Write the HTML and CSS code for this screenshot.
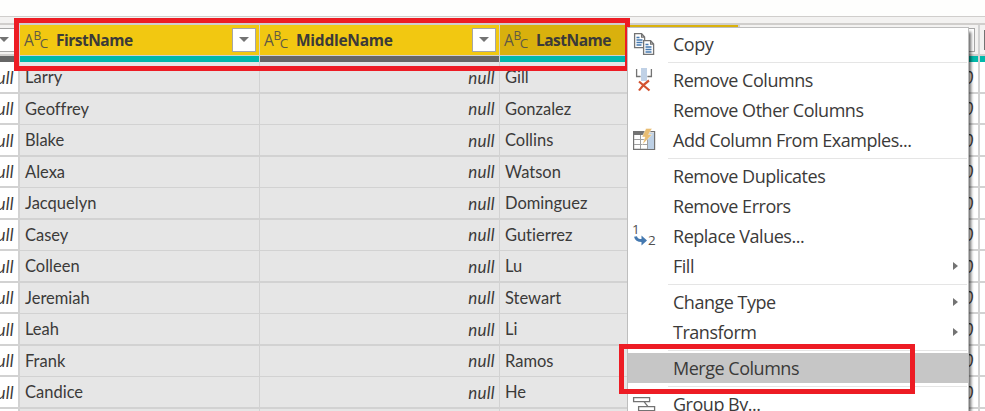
FILE: index.html
```html
<!DOCTYPE html>
<html lang="en">
<head>
<meta charset="utf-8">
<title>Query Editor</title>
<link rel="stylesheet" href="styles.css">
</head>
<body>
<div class="toolbar"></div>
<div class="gutter"></div>
<div class="table">
  <div class="column edge">
    <div class="head"><i class="drop"></i></div><div class="quality gray"></div>
    <div class="cell null">null</div><div class="cell null">null</div><div class="cell null">null</div><div class="cell null">null</div><div class="cell null">null</div><div class="cell null">null</div><div class="cell null">null</div><div class="cell null">null</div><div class="cell null">null</div><div class="cell null">null</div><div class="cell null">null</div><div class="cell"></div>
  </div>
  <div class="column selected">
    <div class="head"><span class="abc"><span>A</span><span class="b">B</span><span class="c">C</span></span><span class="title">FirstName</span><i class="drop"></i></div><div class="quality"></div>
    <div class="cell">Larry</div><div class="cell">Geoffrey</div><div class="cell">Blake</div><div class="cell">Alexa</div><div class="cell">Jacquelyn</div><div class="cell">Casey</div><div class="cell">Colleen</div><div class="cell">Jeremiah</div><div class="cell">Leah</div><div class="cell">Frank</div><div class="cell">Candice</div><div class="cell"></div>
  </div>
  <div class="column selected">
    <div class="head"><span class="abc"><span>A</span><span class="b">B</span><span class="c">C</span></span><span class="title middle">MiddleName</span><i class="drop"></i></div><div class="quality gray"></div>
    <div class="cell null">null</div><div class="cell null">null</div><div class="cell null">null</div><div class="cell null">null</div><div class="cell null">null</div><div class="cell null">null</div><div class="cell null">null</div><div class="cell null">null</div><div class="cell null">null</div><div class="cell null">null</div><div class="cell null">null</div><div class="cell"></div>
  </div>
  <div class="column selected current">
    <div class="head"><span class="abc"><span>A</span><span class="b">B</span><span class="c">C</span></span><span class="title">LastName</span></div><div class="quality"></div>
    <div class="cell">Gill</div><div class="cell">Gonzalez</div><div class="cell">Collins</div><div class="cell">Watson</div><div class="cell">Dominguez</div><div class="cell">Gutierrez</div><div class="cell">Lu</div><div class="cell">Stewart</div><div class="cell">Li</div><div class="cell">Ramos</div><div class="cell">He</div><div class="cell"></div>
  </div>
  <div class="column">
    <div class="head"><i class="drop"></i></div><div class="quality"></div>
    <div class="cell null">0</div><div class="cell null">0</div><div class="cell null">0</div><div class="cell null">0</div><div class="cell null">0</div><div class="cell null">0</div><div class="cell null">0</div><div class="cell null">0</div><div class="cell null">0</div><div class="cell null">0</div><div class="cell null">0</div><div class="cell"></div>
  </div>
  <div class="column last">
    <div class="head"><i class="type"></i></div><div class="quality"></div>
    <div class="cell"></div><div class="cell"></div><div class="cell"></div><div class="cell"></div><div class="cell"></div><div class="cell"></div><div class="cell"></div><div class="cell"></div><div class="cell"></div><div class="cell"></div><div class="cell"></div><div class="cell"></div>
  </div>
</div>

<div class="mark mark-header"></div>

<div class="menu">
  <div class="item"><svg class="icon" width="24" height="24" viewBox="0 0 24 24" fill="#fff" stroke="#737373" stroke-width="1.3"><path d="M2.6 1.6h7l3 3.5v10.500h-10zM9.600 1.600v3.500h3"/><path d="M4.500 5.500h3M4.500 8h6M4.500 10.500h6M4.500 13h5" stroke="#4579b0"/><path d="M11.600 8.600h7l3 3.500v10.300h-10zM18.600 8.600v3.500h3"/><path d="M13.500 12.500h3M13.500 15h6M13.500 17.500h6M13.500 20h6" stroke="#4579b0"/></svg><span>Copy</span></div>
  <hr>
  <div class="item"><svg class="icon" width="24" height="24" viewBox="0 0 24 24" fill="none"><path d="M9 0h6v13H9z" fill="#c0d1e6"/><path d="M4.600 1v7.500h4M19.400 1v7.500h-4" stroke="#737373" stroke-width="1.300"/><path d="m7 13.500 10.500 9M17 12.500Q11 16.500 7 22.500" stroke="#d35230" stroke-width="2.200"/></svg><span>Remove Columns</span></div>
  <div class="item"><i class="icon"></i><span>Remove Other Columns</span></div>
  <div class="item"><svg class="icon" width="24" height="24" viewBox="0 0 24 24"><path d="M1.600 3.600h21v17.800h-21z" fill="#fff" stroke="#737373" stroke-width="1.200"/><path d="M1 3h14v4H1z" fill="#737373"/><path d="M15.500 5h6.500v16h-6.500z" fill="#bdd0e5"/><path d="M8.500 7v14M15.500 7v14M2 11.500h13M2 16.500h13" stroke="#a0a0a0"/><path d="m14 .5h6l-3.500 6h3.500l-9.500 10 2.500-7.500h-3z" fill="#e9bd72" stroke="#fff" stroke-width=".4"/></svg><span>Add Column From Examples...</span></div>
  <hr>
  <div class="item"><i class="icon"></i><span>Remove Duplicates</span></div>
  <div class="item"><i class="icon"></i><span>Remove Errors</span></div>
  <div class="item"><svg class="icon" width="24" height="24" viewBox="0 0 24 24"><text x="0" y="10" class="digit">1</text><text x="16" y="21" class="digit">2</text><path d="M3.500 12.500q1 4.500 7.500 4" fill="none" stroke="#4579b0" stroke-width="3"/><path d="m9.500 11.500 5.500 5-5.500 5z" fill="#4579b0"/></svg><span>Replace Values...</span></div>
  <div class="item sub"><i class="icon"></i><span>Fill</span></div>
  <hr>
  <div class="item sub"><i class="icon"></i><span>Change Type</span></div>
  <div class="item sub"><i class="icon"></i><span>Transform</span></div>
  <hr>
  <div class="item active"><i class="icon"></i><span>Merge Columns</span></div>
  <hr>
  <div class="item"><svg class="icon" width="24" height="24" viewBox="0 0 24 24" fill="#fff" stroke="#737373" stroke-width="1.300"><path d="M1.600 5.600h16v4h-16zM6.600 14.600h16v4h-16zM12 9.600l4 5"/></svg><span>Group By...</span></div>
</div>
<div class="mark mark-merge"></div>
</body>
</html>
```
FILE: styles.css
```css
* { box-sizing: border-box; }
html, body { margin: 0; height: 100%; overflow: hidden; background: #fefefd; }
body { position: relative; font-family: Lato, "Open Sans", sans-serif; font-size: 16.5px; font-variant-ligatures: none; color: #3b3a39; }
.toolbar { height: 17px; border-bottom: 1px solid #d0cecc; }
.gutter { height: 8px; background: #f3f2f1; border-bottom: 2px solid #d0cecc; }
.table { display: grid; grid-template-columns: 20px 240px 240px 240px 240px 5px; height: 386px; overflow: hidden; }
.column { border-right: 2px solid #d2d2d2; background: #fff; min-width: 0; overflow: hidden; }
.column.selected { border-right-width: 1px; background: #e6e6e6; }
.column.current { border-right-width: 2px; }
.column.last { border-right: 0; }
.head { height: 31px; border-bottom: 2px solid #d2d0ce; background: #f3f2f1; display: flex; align-items: flex-start; padding: 3px 3px 0 4px; color: #3b3a39; }
.selected .head { background: #f2c811; border-bottom-width: 1px; }
.current .head { background: #d9b10d; }
.edge .head { padding-left: 0; padding-right: 2px; justify-content: flex-end; }
.edge .drop { margin-left: 0; }
.abc { display: flex; width: 32px; flex: none; font: 15.5px/24px "Open Sans", sans-serif; letter-spacing: -.4px; color: #5f5945; }
.abc span { line-height: 24px; }
.abc .b { font-size: 12px; line-height: 16px; }
.abc .c { font-size: 13.5px; line-height: 30px; margin-left: -1px; }
.title { font: 700 15.5px/25px "Open Sans", sans-serif; letter-spacing: -.5px; white-space: nowrap; }
.title.middle { letter-spacing: -.25px; }
.drop { margin-left: auto; flex: none; width: 24px; height: 24px; border: 1px solid #a6a6a6; background: #fff; display: flex; align-items: center; justify-content: center; }
.drop::after { content: ""; border: 5px solid transparent; border-top-color: #737373; border-bottom: 0; margin-top: -1px; }
.type { width: 16px; height: 20px; margin-top: 2px; flex: none; border: 2px solid #737373; }
.quality { height: 6px; background: #01b8aa; }
.quality.gray { background: #666; }
.cell { height: 31px; line-height: 30px; padding: 0 4px 0 5px; border-bottom: 2px solid #d2d2d2; white-space: nowrap; }
.selected .cell { border-bottom-width: 1px; }
.column .cell:nth-child(odd) { height: 32px; line-height: 31px; border-bottom-width: 2px; }
.null { display: flex; justify-content: flex-end; font-style: italic; font-size: 17px; letter-spacing: .3px; }
.mark { position: absolute; border: 5px solid #ed1c24; }
.mark-header { left: 14px; top: 18px; width: 616px; height: 53px; }
.mark-merge { left: 619px; top: 344px; width: 296px; height: 50px; }
.menu { position: absolute; left: 627px; top: 27px; width: 342px; height: 400px; padding-top: 1px; background: #fff; border: 1px solid #bebebe; box-shadow: 3px 4px 3px -1px rgba(0,0,0,.6); font: 18px/30px "Open Sans", sans-serif; letter-spacing: -.48px; color: #3b3a39; }
.menu hr { height: 1px; margin: 3px 1px 2px 40px; border: 0; background: #e5e5e5; }
.item { height: 30px; display: flex; align-items: center; padding: 0 10px 0 4px; white-space: nowrap; }
.item span { margin-left: 17px; }
.icon { width: 24px; height: 24px; flex: none; }
.sub::after { content: ""; margin-left: auto; border: 4px solid transparent; border-left: 5px solid #737373; border-right: 0; }
.active { background: #c6c6c6; }
.digit { font: 13.5px "Open Sans", sans-serif; fill: #505050; }
```
